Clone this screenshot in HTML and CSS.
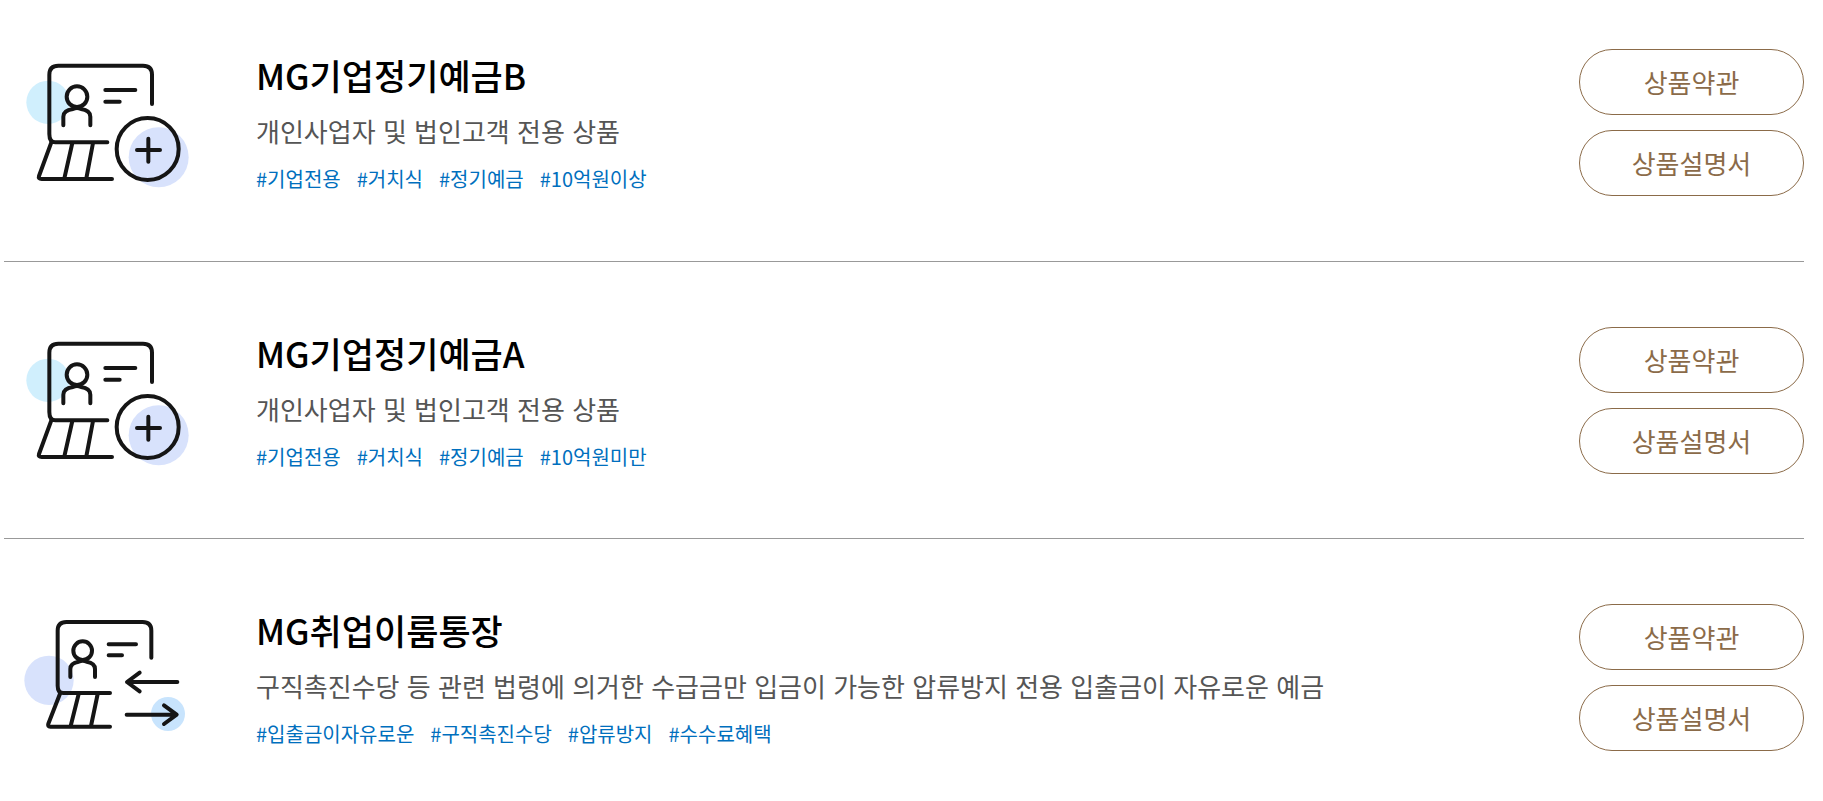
FILE: index.html
```html
<!DOCTYPE html>
<html lang="ko">
<head>
<meta charset="utf-8">
<meta name="viewport" content="width=device-width, initial-scale=1">
<title>MG 예금 상품</title>
<link rel="stylesheet" href="styles.css">
</head>
<body>
<svg class="defs" aria-hidden="true">
  <symbol id="icon-deposit" viewBox="60 27 540 420">
    <circle cx="144" cy="187" r="65" fill="#d0effd"/>
    <circle cx="476" cy="352" r="90" fill="#d8e2fc"/>
    <g class="stroke">
      <path d="M456 192V104Q456 77 429 77H175Q148 77 148 104V282Q148 307 166 307H322"/>
      <path d="M154 307L117 408Q114 417 125 417H336M217 309L193 415M279 309L259 415"/>
      <circle cx="231" cy="170" r="31"/>
      <path d="M190 256V230Q190 211 219 207Q231 201 243 207Q271 211 271 230V256"/>
      <path d="M316 150H406M316 185H359"/>
      <circle cx="443" cy="327" r="93"/>
      <path d="M445 296V365M411 330H480"/>
    </g>
  </symbol>
  <symbol id="icon-transfer" viewBox="60 15 540 420">
    <circle cx="147" cy="244" r="74" fill="#d8e2fc"/>
    <circle cx="504" cy="345" r="51" fill="#c8e4fd"/>
    <g class="stroke">
      <path d="M454 176V95Q454 69 428 69H199Q173 69 173 95V260Q173 282 190 282H330"/>
      <path d="M180 284L145 374Q142 383 151 383H330M236 285L212 381M293 285L273 381"/>
      <circle cx="248" cy="155" r="28"/>
      <path d="M211 234V210Q211 192 236 188Q248 182 260 188Q285 192 285 210V234"/>
      <path d="M326 136H408M326 169H366"/>
      <path d="M532 249H382M419 221L381 249L419 277"/>
      <path d="M380 347H529M492 319L530 347L492 375"/>
    </g>
  </symbol>
</svg>
<ul class="products">
  <li class="product">
    <svg class="product-icon" aria-hidden="true"><use href="#icon-deposit"/></svg>
    <div class="product-info">
      <h2 class="product-name">MG기업정기예금B</h2>
      <p class="product-desc">개인사업자 및 법인고객 전용 상품</p>
      <ul class="tags"><li>#기업전용</li><li>#거치식</li><li>#정기예금</li><li>#10억원이상</li></ul>
    </div>
    <div class="product-actions">
      <button class="button" type="button">상품약관</button>
      <button class="button" type="button">상품설명서</button>
    </div>
  </li>
  <li class="product">
    <svg class="product-icon" aria-hidden="true"><use href="#icon-deposit"/></svg>
    <div class="product-info">
      <h2 class="product-name">MG기업정기예금A</h2>
      <p class="product-desc">개인사업자 및 법인고객 전용 상품</p>
      <ul class="tags"><li>#기업전용</li><li>#거치식</li><li>#정기예금</li><li>#10억원미만</li></ul>
    </div>
    <div class="product-actions">
      <button class="button" type="button">상품약관</button>
      <button class="button" type="button">상품설명서</button>
    </div>
  </li>
  <li class="product">
    <svg class="product-icon" aria-hidden="true"><use href="#icon-transfer"/></svg>
    <div class="product-info">
      <h2 class="product-name">MG취업이룸통장</h2>
      <p class="product-desc">구직촉진수당 등 관련 법령에 의거한 수급금만 입금이 가능한 압류방지 전용 입출금이 자유로운 예금</p>
      <ul class="tags"><li>#입출금이자유로운</li><li>#구직촉진수당</li><li>#압류방지</li><li>#수수료혜택</li></ul>
    </div>
    <div class="product-actions">
      <button class="button" type="button">상품약관</button>
      <button class="button" type="button">상품설명서</button>
    </div>
  </li>
</ul>
</body>
</html>
```
FILE: styles.css
```css
* {
  box-sizing: border-box;
}

body {
  margin: 0;
  background: #fff;
  color: #000;
  font-family: "Noto Sans CJK KR", sans-serif;
}

h2,
p,
ul {
  margin: 0;
  padding: 0;
}

ul {
  list-style: none;
}

.defs {
  position: absolute;
  width: 0;
  height: 0;
}

.stroke {
  fill: none;
  stroke: #151515;
  stroke-width: 12;
  stroke-linecap: round;
  stroke-linejoin: round;
}

.products {
  padding: 0 19px 0 4px;
}

.product {
  display: flex;
  align-items: flex-start;
  padding: 65px 0 64px;
  border-bottom: 1px solid #999;
}

.product:first-child {
  padding: 49px 0 65px;
}

.product:last-child {
  padding-bottom: 48px;
  border-bottom: 0;
}

.product-icon {
  flex: none;
  width: 180px;
  height: 140px;
  margin: 0 56px 0 16px;
}

.product-info {
  flex: 1;
  min-width: 0;
}

.product-name {
  font-size: 35px;
  font-weight: 500;
  line-height: 52px;
}

.product-desc {
  margin-top: 10px;
  color: #555;
  font-size: 26px;
  line-height: 40px;
}

.tags {
  display: flex;
  flex-wrap: wrap;
  gap: 0 16px;
  margin-top: 12px;
  color: #006fbe;
  font-size: 20px;
  line-height: 32px;
}

.product-actions {
  display: flex;
  flex: none;
  flex-direction: column;
  gap: 15px;
  width: 225px;
}

.button {
  height: 66px;
  padding: 0 0 2px;
  border: 1px solid #8b6b49;
  border-radius: 33px;
  background: #fff;
  color: #8b6b49;
  font: inherit;
  font-size: 26px;
}
```
